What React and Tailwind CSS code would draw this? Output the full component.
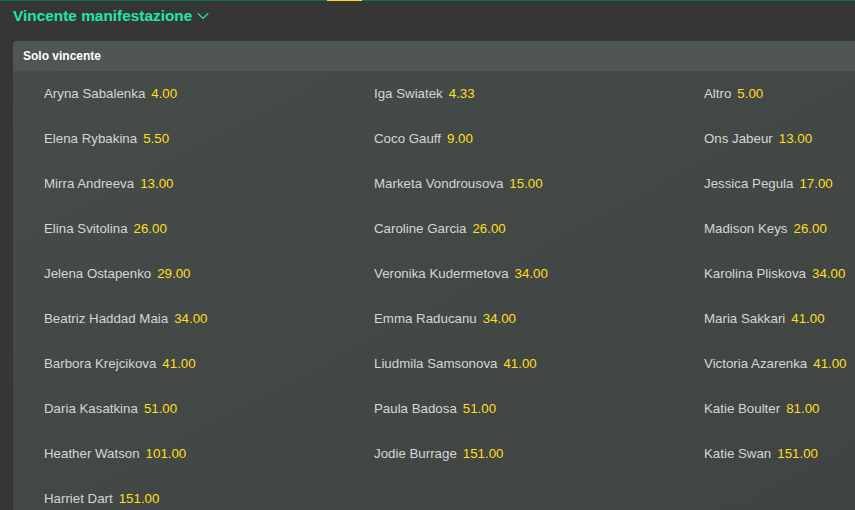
import { ChevronDown } from 'lucide-react';

const runners = [
  ['Aryna Sabalenka', '4.00'],
  ['Iga Swiatek', '4.33'],
  ['Altro', '5.00'],
  ['Elena Rybakina', '5.50'],
  ['Coco Gauff', '9.00'],
  ['Ons Jabeur', '13.00'],
  ['Mirra Andreeva', '13.00'],
  ['Marketa Vondrousova', '15.00'],
  ['Jessica Pegula', '17.00'],
  ['Elina Svitolina', '26.00'],
  ['Caroline Garcia', '26.00'],
  ['Madison Keys', '26.00'],
  ['Jelena Ostapenko', '29.00'],
  ['Veronika Kudermetova', '34.00'],
  ['Karolina Pliskova', '34.00'],
  ['Beatriz Haddad Maia', '34.00'],
  ['Emma Raducanu', '34.00'],
  ['Maria Sakkari', '41.00'],
  ['Barbora Krejcikova', '41.00'],
  ['Liudmila Samsonova', '41.00'],
  ['Victoria Azarenka', '41.00'],
  ['Daria Kasatkina', '51.00'],
  ['Paula Badosa', '51.00'],
  ['Katie Boulter', '81.00'],
  ['Heather Watson', '101.00'],
  ['Jodie Burrage', '151.00'],
  ['Katie Swan', '151.00'],
  ['Harriet Dart', '151.00'],
];

const App = () => {
  return (
    <div
      className="h-[510px] w-[855px] overflow-hidden bg-[#363636]"
      style={{ fontFamily: '"Liberation Sans", Arial, sans-serif' }}
    >
      <div className="flex h-px bg-[#0b6e4f]">
        <div className="ml-[327px] h-px w-[35px] bg-[#ffdf1b]" />
      </div>

      <div className="flex h-[40px] items-center pl-[13px] pb-[13px] pt-[2px]">
        <h1 className="text-[15.4px] font-bold text-[#1ee8a5]">Vincente manifestazione</h1>
        <ChevronDown className="ml-px h-5 w-5 text-[#1ee8a5]" strokeWidth={1.4} />
      </div>

      <div className="ml-[13px] w-[900px] rounded-tl-[4px] bg-gradient-to-br from-[#454c49] to-[#404442]">
        <div className="flex h-[30px] items-center rounded-tl-[4px] bg-[#4f5653] px-[10px]">
          <span className="text-[12px] font-bold text-white">Solo vincente</span>
        </div>

        <div className="grid grid-cols-[330px_330px_240px] pl-[31px]">
          {runners.map(([name, odds]) => (
            <div key={name} className="flex h-[45px] items-center gap-[6px] text-[13.3px]">
              <span className="text-[#d6d6d6]">{name}</span>
              <span className="text-[#ffdf1b]">{odds}</span>
            </div>
          ))}
        </div>
      </div>
    </div>
  );
};

export default App;
